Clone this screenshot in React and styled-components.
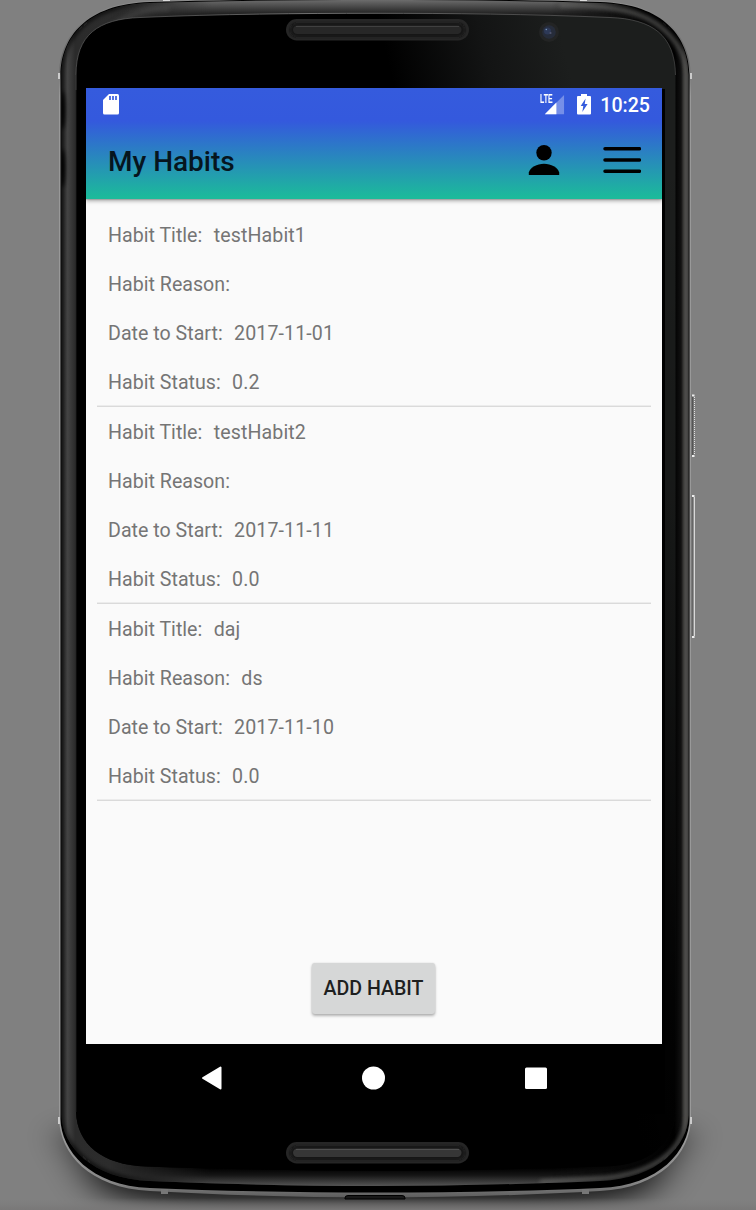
import React from "react";
import styled, { createGlobalStyle } from "styled-components";

const GlobalStyle = createGlobalStyle`
  html, body { margin: 0; padding: 0; background: #808080; }
  body { font-family: Roboto, sans-serif; overflow: hidden; }
  *, *::before, *::after { box-sizing: border-box; }
`;

const Stage = styled.main`
  position: relative;
  width: 756px;
  height: 1210px;
  overflow: hidden;
  background: #808080;
`;

const FrameArt = styled.svg`
  position: absolute;
  inset: 0;
  z-index: 0;
`;

const Screen = styled.div`
  position: relative;
  z-index: 1;
  display: flex;
  flex-direction: column;
  width: 576px;
  height: 1023px;
  margin: 88px 0 0 86px;
`;

const Header = styled.header`
  flex: none;
  display: flex;
  flex-direction: column;
  height: 111px;
  background: linear-gradient(to bottom, #355bdd 0, #3459dd 33px, #1cba9b 109px, #1cba9b 111px);
  box-shadow: 0 2px 4px rgba(0, 0, 0, 0.32), 0 1px 1px rgba(0, 0, 0, 0.12);
  clip-path: inset(0 0 -12px 0);
  z-index: 1;
`;

const StatusBar = styled.div`
  flex: none;
  display: flex;
  align-items: center;
  height: 33px;
  padding: 0 12px 0 16px;
`;

const StatusIcons = styled.div`
  display: flex;
  align-items: center;
  margin-left: auto;
`;

const Clock = styled.span`
  margin-left: 9px;
  padding-top: 2px;
  font-size: 19.6px;
  font-weight: 500;
  line-height: 31px;
  color: #fff;
`;

const Toolbar = styled.div`
  flex: 1;
  display: flex;
  align-items: center;
  padding: 0 21px 0 22px;
`;

const Title = styled.h1`
  flex: 1;
  margin: 0;
  padding-top: 3px;
  font-size: 28px;
  font-weight: 500;
  line-height: 36px;
  color: #06151e;
`;

const IconButton = styled.button`
  display: flex;
  margin: 0 0 0 ${(p) => p.$gap || 0}px;
  padding: 0;
  border: 0;
  background: none;
`;

const Content = styled.section`
  flex: 1;
  display: flex;
  flex-direction: column;
  align-items: center;
  justify-content: space-between;
  padding: 11px 11px 30px;
  background: #fafafa;
`;

const HabitList = styled.ul`
  align-self: stretch;
  margin: 0;
  padding: 0;
  list-style: none;
`;

const HabitItem = styled.li`
  height: 197px;
  padding: 1px 11px 0;
  box-shadow: inset 0 -1px #dadada, inset 0 -2px #ececec;
`;

const Field = styled.div`
  display: flex;
  align-items: center;
  height: 49px;
  padding-top: 1px;
  font-size: 19.6px;
  line-height: 24px;
  color: #757575;
  white-space: nowrap;
`;

const Label = styled.span`
  margin-right: 11.4px;
  letter-spacing: 0.02px;
`;

const Value = styled.span`
  letter-spacing: 0.11px;
`;

const AddButton = styled.button`
  width: 123px;
  height: 51px;
  margin-right: 1px;
  padding: 1px 0 0;
  border: 0;
  border-radius: 3px;
  background: #d6d7d7;
  box-shadow: 0 2px 3px rgba(0, 0, 0, 0.28), 0 0 2px rgba(0, 0, 0, 0.12);
  font: 500 19.6px/50px Roboto, sans-serif;
  color: #1e1f1f;
  white-space: nowrap;
`;

const NavBar = styled.nav`
  flex: none;
  display: flex;
  align-items: center;
  justify-content: space-between;
  height: 67px;
  padding: 0 115px;
  background: #000;
`;

const OUTER =
  "M60.5 75C61 38 85 4 150 2C220 0 300-1 375-1S530 0 600 2C665 4 689 38 689.5 75V1119C689 1150 660 1186 600 1188C530 1191 450 1192.500 375 1192.500S220 1191 150 1188C90 1186 61 1150 60.500 1119Z";
const RIM =
  "M61.5 75C62 38 86 5 150 3C220 1 300 0 375 0S530 1 600 3C664 5 688 38 688.500 75V1115C688 1146 658 1179 600 1181C530 1184 450 1186 375 1186S220 1184 150 1181C92 1179 62 1146 61.500 1115Z";
const GLASS =
  "M76 75C76 35 98 19 140 17.500C220 14 300 13.300 375 13.300S530 14 610 17.500C652 19 675 35 675.500 75V1112C674 1144 650 1165 606 1166.500C530 1169 450 1171 375 1171S220 1169 146 1166.500C102 1165 77 1144 76 1112Z";
const CASE =
  "M59 75C60 37 84 3 150 1C220-1 300-2 375-2S530-1 600 1C666 3 690 37 691 75V1119C690 1153 661 1188 600 1191C530 1195 450 1197.500 375 1197.500S220 1195 150 1191C89 1188 60 1153 59 1119Z";

function Speaker({ y, bright }) {
  return (
    <g>
      <rect x="286" y={y} width="183" height="21.500" rx="10.700" fill="#262626" />
      <rect x="290" y={y + 4} width="175" height="14" rx="7" fill="#141414" filter="url(#soft1)" />
      <rect x="293" y={y + 6.5} width="168.500" height="8.500" rx="4.200" fill={bright ? "#363636" : "#272727"} />
      <path d={`M296 ${y + 7.5}H459`} stroke={bright ? "#505050" : "#404040"} strokeWidth="1" />
    </g>
  );
}

function PhoneFrame() {
  return (
    <FrameArt width="756" height="1210" viewBox="0 0 756 1210" aria-hidden="true">
      <defs>
        <filter id="soft1" x="-10%" y="-60%" width="120%" height="220%"><feGaussianBlur stdDeviation="1" /></filter>
        <filter id="soft3" x="-10%" y="-10%" width="120%" height="120%"><feGaussianBlur stdDeviation="2.200" /></filter>
        <filter id="wide" x="0" y="0" width="756" height="1210" filterUnits="userSpaceOnUse"><feGaussianBlur stdDeviation="2.200" /></filter>
        <filter id="shadow" x="-20%" y="-60%" width="140%" height="220%"><feGaussianBlur stdDeviation="20 12" /></filter>
        <linearGradient id="rimSide" x1="60" x2="690" y1="0" y2="0" gradientUnits="userSpaceOnUse">
          <stop offset="0" stopColor="#262626" />
          <stop offset=".012" stopColor="#444" />
          <stop offset=".024" stopColor="#2b2b2b" />
          <stop offset=".5" stopColor="#333" />
          <stop offset=".975" stopColor="#000" />
          <stop offset=".986" stopColor="#111" />
          <stop offset=".993" stopColor="#4a4845" />
          <stop offset="1" stopColor="#5c5a58" />
        </linearGradient>
        <linearGradient id="topRim" x1="0" x2="0" y1="0" y2="14" gradientUnits="userSpaceOnUse">
          <stop offset="0" stopColor="#6c6c6c" />
          <stop offset=".55" stopColor="#434343" />
          <stop offset="1" stopColor="#202020" />
        </linearGradient>
        <linearGradient id="bottomRim" x1="0" x2="0" y1="1168" y2="1186" gradientUnits="userSpaceOnUse">
          <stop offset="0" stopColor="#000" />
          <stop offset=".4" stopColor="#151515" />
          <stop offset="1" stopColor="#555" />
        </linearGradient>
        <linearGradient id="acrossFade" x1="60" x2="690" y1="0" y2="0" gradientUnits="userSpaceOnUse">
          <stop offset=".08" stopColor="#fff" stopOpacity="0" />
          <stop offset=".24" stopColor="#fff" />
          <stop offset=".78" stopColor="#fff" />
          <stop offset=".93" stopColor="#fff" stopOpacity="0" />
        </linearGradient>
        <mask id="middle"><rect width="756" height="1210" fill="url(#acrossFade)" /></mask>
        <linearGradient id="glass" x1="390" x2="560" y1="70" y2="30" gradientUnits="userSpaceOnUse">
          <stop offset="0" stopColor="#000" />
          <stop offset=".55" stopColor="#131414" />
          <stop offset="1" stopColor="#1c1e1d" />
        </linearGradient>
        <linearGradient id="glassDim" x1="0" x2="0" y1="150" y2="1160" gradientUnits="userSpaceOnUse">
          <stop offset="0" stopColor="#000" stopOpacity="0" />
          <stop offset=".5" stopColor="#000" stopOpacity=".28" />
          <stop offset=".85" stopColor="#000" stopOpacity=".78" />
          <stop offset="1" stopColor="#000" stopOpacity=".86" />
        </linearGradient>
        <linearGradient id="edge" x1="0" x2="756" y1="0" y2="0" gradientUnits="userSpaceOnUse">
          <stop offset=".22" stopColor="#666" stopOpacity=".8" />
          <stop offset=".4" stopColor="#888" />
          <stop offset=".7" stopColor="#555" />
          <stop offset=".9" stopColor="#777" stopOpacity=".5" />
        </linearGradient>
        <linearGradient id="floor" x1="0" x2="0" y1="1198" y2="1210" gradientUnits="userSpaceOnUse">
          <stop offset="0" stopColor="#808080" stopOpacity="0" />
          <stop offset=".8" stopColor="#797878" stopOpacity=".75" />
          <stop offset="1" stopColor="#797878" stopOpacity=".95" />
        </linearGradient>
        <linearGradient id="caseFill" x1="0" x2="0" y1="0" y2="1200" gradientUnits="userSpaceOnUse">
          <stop offset="0" stopColor="#8c8c8c" />
          <stop offset=".05" stopColor="#666" />
          <stop offset=".08" stopColor="#999" />
          <stop offset=".95" stopColor="#999" />
          <stop offset=".985" stopColor="#888" />
          <stop offset="1" stopColor="#555" />
        </linearGradient>
        <clipPath id="rimClip"><path d={RIM} /></clipPath>
      </defs>

      <path d="M65 1130H685L650 1192Q610 1205 530 1206H220Q140 1205 100 1192Z" fill="#000" opacity=".8" filter="url(#shadow)" />
      <rect y="1190" width="756" height="20" fill="url(#floor)" />

      <path d={CASE} fill="url(#caseFill)" />
      <path d="M58 73h2v6h-2zM690 73h2v6h-2zM58 1117h2v7h-2zM690 1117h2v7h-2z" fill="#ccc" />
      <path d="M163 0h7v1h-7zM580 0h7v1h-7z" fill="#ddd" />
      <path d="M161 1189h7v5h-7zM582 1189h7v5h-7z" fill="#777" />
      <path d="M345 1199V1198Q345 1195.500 348 1195.500H402Q405 1195.500 405 1198V1199Z" fill="#181818" stroke="#000" />

      <path d={OUTER} fill="#000" />
      <path d={RIM} fill="url(#rimSide)" />
      <g clipPath="url(#rimClip)">
        <path d={RIM} fill="none" stroke="#0a0a0a" strokeWidth="3" filter="url(#soft3)" />
        <g mask="url(#middle)">
          <rect x="60" y="-1" width="630" height="20" fill="url(#topRim)" />
          <rect x="60" y="1160" width="630" height="27" fill="url(#bottomRim)" />
        </g>
        <path d="M100 40Q120 10 170 8" fill="none" stroke="#505050" strokeWidth="6" opacity=".45" filter="url(#wide)" />
        <path d="M560 5Q600 5 626 11C662 19 686 46 686.500 76V1115C686 1142 664 1172 606 1178L540 1182" fill="none" stroke="#6b6b69" strokeWidth="3.500" opacity=".8" filter="url(#wide)" />
        <ellipse cx="62" cy="110" rx="3" ry="19" fill="#000" filter="url(#wide)" />
        <ellipse cx="62" cy="168" rx="3" ry="19" fill="#000" filter="url(#wide)" />
      </g>

      <path d={GLASS} fill="url(#glass)" />
      <path d={GLASS} fill="url(#glassDim)" />
      <path d="M76 90V75C76 35 98 19 140 17.500C220 14 300 13.300 375 13.300S530 14 610 17.500C652 19 675 35 675.500 75" fill="none" stroke="url(#edge)" strokeWidth=".8" />
      <path d="M76 75V1112" stroke="#222" strokeWidth=".8" />
      <rect x="655" y="89" width="10" height="1025" fill="#000" />
      <rect x="86" y="1044" width="579" height="70" fill="#000" />

      <Speaker y={19} />
      <Speaker y={1142} bright />

      <circle cx="549" cy="32" r="10" fill="#232424" />
      <circle cx="549" cy="32" r="6.800" fill="#262c3a" />
      <circle cx="547.500" cy="31" r="3.500" fill="#2d3957" />
      <circle cx="546.300" cy="29.500" r=".8" fill="#7796b8" />
      <circle cx="550.500" cy="33" r="1.100" fill="#51556e" />

      <path d="M692.500 395v61" stroke="#555" strokeWidth="1.500" />
      <path d="M694.500 397v58" stroke="#e2e2e2" strokeWidth="1" strokeDasharray="1 1" />
      <path d="M692 395.500h2.500M692 456h2.500M692 496h2.500M692 637h2.500" stroke="#eee" strokeWidth="2" />
      <path d="M692.500 497v139" stroke="#666" strokeWidth="1.500" />
      <path d="M694.300 497v139" stroke="#eee" strokeWidth="1" />
    </FrameArt>
  );
}

const SdCard = () => (
  <svg width="18" height="22" viewBox="0 0 18 22">
    <path d="M7 0h8.500a1.500 1.500 0 0 1 1.500 1.500v17.500a1.500 1.500 0 0 1-1.500 1.500H2.500A1.500 1.500 0 0 1 1 19V6Z" fill="#fff" />
    <path d="M7 2h2v4H7zM10 2h2v4h-2zM13 2h2v4h-2z" fill="#5876e2" />
  </svg>
);

const SignalWrap = styled.div`
  position: relative;
  display: flex;
  width: 25px;
  height: 22px;
`;

const LteBadge = styled.span`
  position: absolute;
  left: 0;
  top: -1px;
  font-family: "Liberation Sans", Roboto, sans-serif;
  font-size: 12.5px;
  font-weight: 700;
  line-height: 12px;
  color: #fff;
  transform: scaleX(0.56);
  transform-origin: left;
`;

const Signal = () => (
  <SignalWrap>
    <svg width="26" height="22" viewBox="0 0 26 22">
      <path d="M5 20.500 25 .5V20.500Z" fill="#fff" opacity=".32" />
      <path d="M5 20.500 17 8.500V20.500Z" fill="#fff" />
    </svg>
    <LteBadge>LTE</LteBadge>
  </SignalWrap>
);

const BatterySvg = styled.svg`
  margin-left: 12px;
`;

const Battery = () => (
  <BatterySvg width="14" height="22" viewBox="0 0 14 22">
    <path d="M4 0h6v2h3a1 1 0 0 1 1 1V19.500a1 1 0 0 1-1 1H1a1 1 0 0 1-1-1V3a1 1 0 0 1 1-1h3Z" fill="#fff" />
    <path d="M8.600 4.500 3.700 12H6.300L5.300 18 10.600 10H7.700Z" fill="#355bdd" />
  </BatterySvg>
);

const Person = () => (
  <svg width="32" height="32" viewBox="0 0 32 32">
    <circle cx="16" cy="8.800" r="7.700" fill="#000" />
    <path d="M.8 31V28.500C2 23.500 9 19.800 16 19.800S30 23.500 31.200 28.500V31Z" fill="#000" />
  </svg>
);

const Menu = () => (
  <svg width="38" height="30" viewBox="0 0 38 30">
    <path d="M2 3.800H36.500M2 15H36.500M2 26.200H36.500" stroke="#000" strokeWidth="3.500" strokeLinecap="round" />
  </svg>
);

const habits = [
  { title: "testHabit1", reason: "", date: "2017-11-01", status: "0.2" },
  { title: "testHabit2", reason: "", date: "2017-11-11", status: "0.0" },
  { title: "daj", reason: "ds", date: "2017-11-10", status: "0.0" },
];

function Habit({ habit }) {
  return (
    <HabitItem>
      <Field><Label>Habit Title:</Label><Value>{habit.title}</Value></Field>
      <Field><Label>Habit Reason:</Label><Value>{habit.reason}</Value></Field>
      <Field><Label>Date to Start:</Label><Value>{habit.date}</Value></Field>
      <Field><Label>Habit Status:</Label><Value>{habit.status}</Value></Field>
    </HabitItem>
  );
}

export default function App() {
  return (
    <Stage>
      <GlobalStyle />
      <PhoneFrame />
      <Screen>
        <Header>
          <StatusBar>
            <SdCard />
            <StatusIcons>
              <Signal />
              <Battery />
              <Clock>10:25</Clock>
            </StatusIcons>
          </StatusBar>
          <Toolbar>
            <Title>My Habits</Title>
            <IconButton aria-label="Profile"><Person /></IconButton>
            <IconButton aria-label="Menu" $gap={43}><Menu /></IconButton>
          </Toolbar>
        </Header>
        <Content>
          <HabitList>
            {habits.map((h) => <Habit key={h.title} habit={h} />)}
          </HabitList>
          <AddButton>ADD HABIT</AddButton>
        </Content>
        <NavBar>
          <svg width="22" height="24" viewBox="0 0 22 24">
            <path d="M2 12 19.500 1.500V22.500Z" fill="#fff" stroke="#fff" strokeWidth="2" strokeLinejoin="round" />
          </svg>
          <svg width="24" height="24" viewBox="0 0 24 24"><circle cx="11.500" cy="12" r="11.500" fill="#fff" /></svg>
          <svg width="22" height="22" viewBox="0 0 22 22"><rect y=".5" width="22" height="21.500" rx="1.500" fill="#fff" /></svg>
        </NavBar>
      </Screen>
    </Stage>
  );
}
